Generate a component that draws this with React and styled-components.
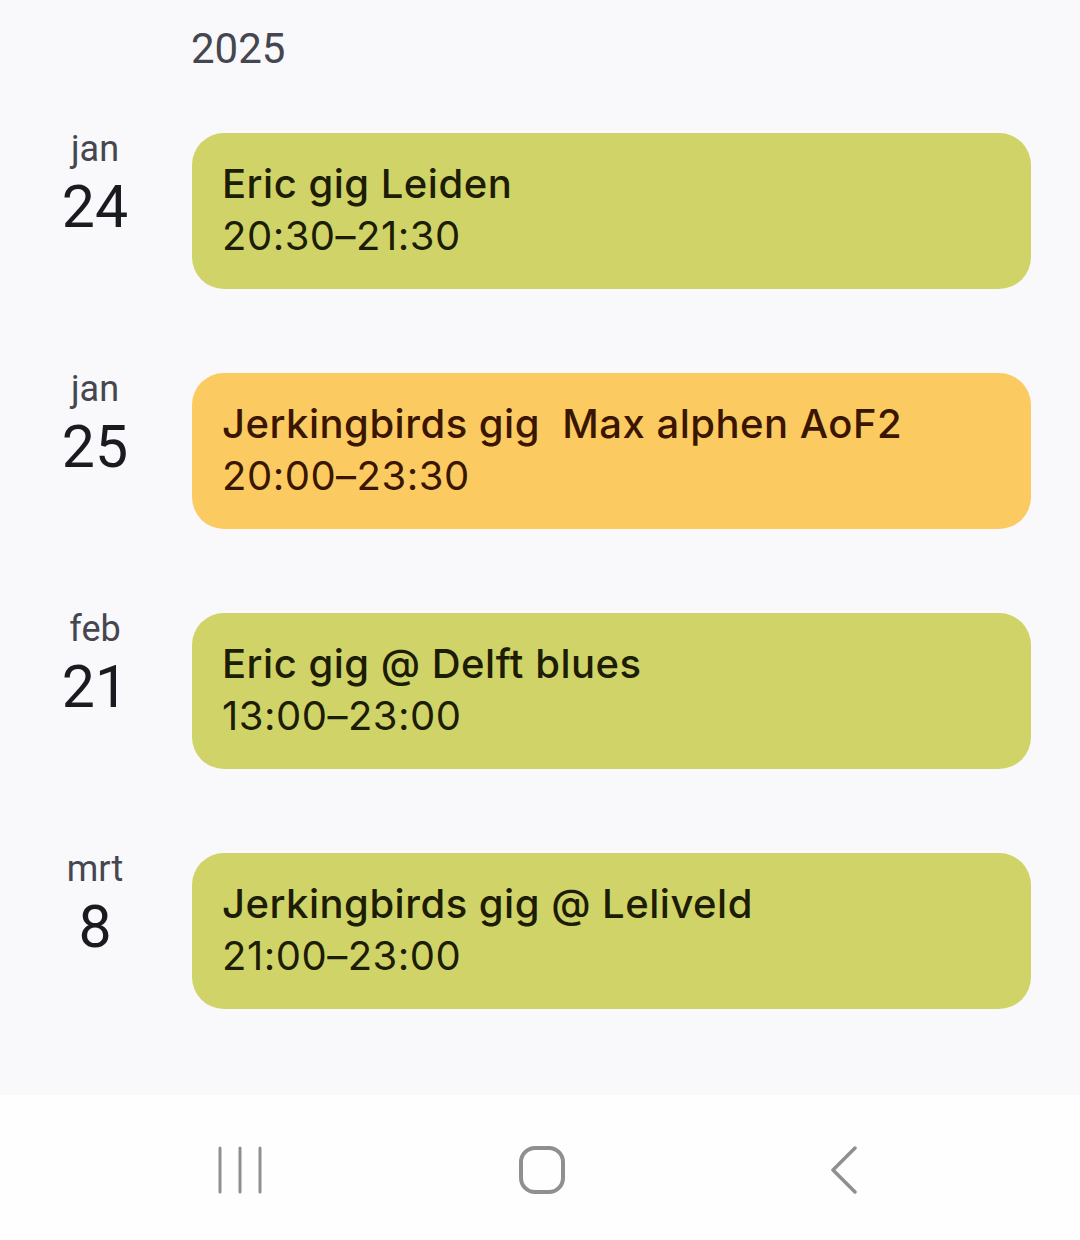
import React from "react";
import styled, {createGlobalStyle} from "styled-components";

const GlobalStyle = createGlobalStyle`
    html, body {
        margin: 0;
        padding: 0;
        background: #f9f9fc;
    }
    body {
        font-family: Roboto, "Noto Sans", "Liberation Sans", sans-serif;
    }
`;

const Screen = styled.div`
    display: flex;
    flex-direction: column;
    min-height: 1240px;
    background: #f9f9fc;
`;

const Content = styled.div`
    flex: 1;
    padding-top: 24px;
`;

const Year = styled.div`
    padding-left: 191px;
    font-size: 42px;
    line-height: 50px;
    color: #45464f;
    margin-bottom: 59px;
`;

const List = styled.div`
    display: flex;
    flex-direction: column;
    gap: 84px;
`;

const Row = styled.div`
    display: flex;
    align-items: flex-start;
`;

const DateCol = styled.div`
    width: 192px;
    padding-right: 2px;
    box-sizing: border-box;
    display: flex;
    flex-direction: column;
    align-items: center;
    margin-top: -6px;
`;

const Month = styled.div`
    font-size: 36px;
    line-height: 44px;
    color: #45464f;
`;

const Day = styled.div`
    font-size: 59px;
    line-height: 62px;
    margin-top: 5px;
    color: #1a1b20;
`;

const Card = styled.div`
    width: 839px;
    height: 156px;
    box-sizing: border-box;
    padding: 0 30px;
    border-radius: 32px;
    background: ${p => p.$tone === "orange" ? "#fbca61" : "#d0d468"};
    color: ${p => p.$tone === "orange" ? "#3a1600" : "#1c1d04"};
    display: flex;
    flex-direction: column;
    justify-content: center;
    font-family: Inter, Roboto, sans-serif;
    letter-spacing: 0.5px;
`;

const Title = styled.div`
    font-size: 40px;
    font-weight: 500;
    line-height: 52px;
    white-space: pre;
    margin-top: -2px;
`;

const Time = styled.div`
    font-size: 40px;
    line-height: 52px;
`;

const NavBar = styled.div`
    height: 145px;
    background: #fefefe;
    display: flex;
    justify-content: center;
    align-items: center;
    gap: 182px;
    padding-left: 4px;
    padding-top: 5px;
    box-sizing: border-box;
`;

const NavButton = styled.div`
    width: 120px;
    height: 60px;
    display: flex;
    align-items: center;
    justify-content: center;
`;

const events = [
    {month: "jan", day: "24", title: "Eric gig Leiden", time: "20:30–21:30", tone: "green"},
    {month: "jan", day: "25", title: "Jerkingbirds gig  Max alphen AoF2", time: "20:00–23:30", tone: "orange"},
    {month: "feb", day: "21", title: "Eric gig @ Delft blues", time: "13:00–23:00", tone: "green"},
    {month: "mrt", day: "8", title: "Jerkingbirds gig @ Leliveld", time: "21:00–23:00", tone: "green"},
];

const RecentIcon = () => (
    <svg width="46" height="48" viewBox="0 0 46 48" fill="none" stroke="#8f8f8f" strokeWidth="3" strokeLinecap="round">
        <line x1="3" y1="2" x2="3" y2="46"/>
        <line x1="23" y1="2" x2="23" y2="46"/>
        <line x1="43" y1="2" x2="43" y2="46"/>
    </svg>
);

const HomeIcon = () => (
    <svg width="48" height="48" viewBox="0 0 48 48" fill="none" stroke="#8f8f8f" strokeWidth="4">
        <rect x="3" y="2" width="42" height="44" rx="14"/>
    </svg>
);

const BackIcon = () => (
    <svg width="30" height="48" viewBox="0 0 30 48" fill="none" stroke="#8f8f8f" strokeWidth="3.5" strokeLinecap="round" strokeLinejoin="round">
        <polyline points="26,2 4,24 26,46"/>
    </svg>
);

const App = () => {
    return (
        <Screen>
            <GlobalStyle/>
            <Content>
                <Year>2025</Year>
                <List>
                    {events.map((event, index) => (
                        <Row key={index}>
                            <DateCol>
                                <Month>{event.month}</Month>
                                <Day>{event.day}</Day>
                            </DateCol>
                            <Card $tone={event.tone}>
                                <Title>{event.title}</Title>
                                <Time>{event.time}</Time>
                            </Card>
                        </Row>
                    ))}
                </List>
            </Content>
            <NavBar>
                <NavButton><RecentIcon/></NavButton>
                <NavButton><HomeIcon/></NavButton>
                <NavButton><BackIcon/></NavButton>
            </NavBar>
        </Screen>
    );
};

export default App;
